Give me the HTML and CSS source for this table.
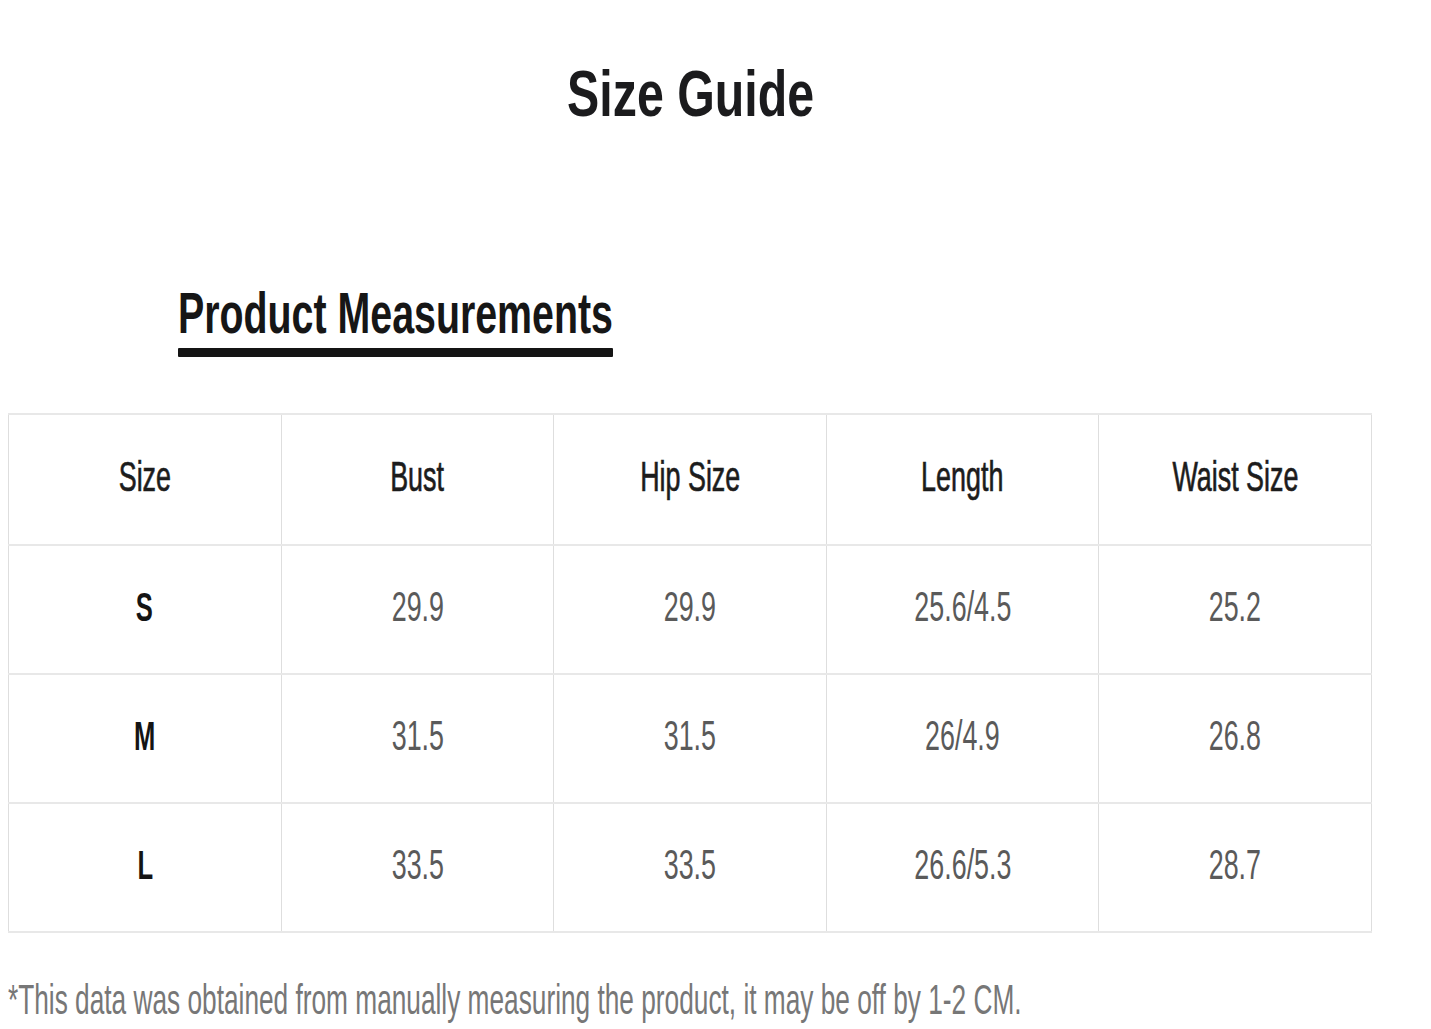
FILE: index.html
```html
<!DOCTYPE html>
<html lang="en">
<head>
<meta charset="utf-8">
<title>Size Guide</title>
<link rel="stylesheet" href="styles.css">
</head>
<body>
<div class="page">
  <h1 class="title"><span class="sq sq-title">Size Guide</span></h1>
  <div class="subhead">
    <h2 class="subtitle"><span class="sq sq-sub">Product Measurements</span></h2>
    <div class="underline"></div>
  </div>
  <table class="sizes">
    <thead>
      <tr>
        <th><span class="sq">Size</span></th>
        <th><span class="sq">Bust</span></th>
        <th><span class="sq">Hip Size</span></th>
        <th><span class="sq">Length</span></th>
        <th><span class="sq">Waist Size</span></th>
      </tr>
    </thead>
    <tbody>
      <tr>
        <td class="sz"><span class="sq">S</span></td>
        <td><span class="sq">29.9</span></td>
        <td><span class="sq">29.9</span></td>
        <td><span class="sq">25.6/4.5</span></td>
        <td><span class="sq">25.2</span></td>
      </tr>
      <tr>
        <td class="sz"><span class="sq">M</span></td>
        <td><span class="sq">31.5</span></td>
        <td><span class="sq">31.5</span></td>
        <td><span class="sq">26/4.9</span></td>
        <td><span class="sq">26.8</span></td>
      </tr>
      <tr>
        <td class="sz"><span class="sq">L</span></td>
        <td><span class="sq">33.5</span></td>
        <td><span class="sq">33.5</span></td>
        <td><span class="sq">26.6/5.3</span></td>
        <td><span class="sq">28.7</span></td>
      </tr>
    </tbody>
  </table>
  <p class="note"><span class="sq sq-note">*This data was obtained from manually measuring the product, it may be off by 1-2 CM.</span></p>
</div>
</body>
</html>
```
FILE: styles.css
```css
html, body {
  margin: 0;
  padding: 0;
  background: #ffffff;
}

body {
  font-family: "Liberation Sans", Arial, sans-serif;
  color: #1a1a1a;
}

.page {
  width: 1431px;
  height: 1029px;
  overflow: hidden;
  position: relative;
}

.sq {
  display: inline-block;
  white-space: nowrap;
  transform: scaleX(0.64);
  transform-origin: center center;
}

.title {
  margin: 0;
  padding-top: 62px;
  text-align: center;
  font-size: 64px;
  line-height: 64px;
  font-weight: 700;
  color: #1b1b1d;
}

.sq-title {
  transform: scaleX(0.755);
  margin-left: -50px;
}

.subhead {
  margin-top: 159px;
  margin-left: 178px;
  width: 435px;
}

.subtitle {
  margin: 0;
  font-size: 57px;
  line-height: 57px;
  font-weight: 700;
  color: #161616;
  height: 57px;
}

.sq-sub {
  transform: scaleX(0.69);
  transform-origin: left center;
}

.underline {
  margin-top: 6px;
  height: 9px;
  background: #141414;
  border-radius: 1px;
}

.sizes {
  margin-top: 56px;
  margin-left: 8px;
  width: 1364px;
  border-collapse: collapse;
  table-layout: fixed;
}

.sizes th,
.sizes td {
  height: 121px;
  padding: 0 0 6px 0;
  border-left: 1px solid #dedede;
  border-right: 1px solid #dedede;
  border-top: 2px solid #e8e8e8;
  border-bottom: 2px solid #e8e8e8;
  text-align: center;
  vertical-align: middle;
  font-size: 42px;
  line-height: 42px;
}

.sizes th {
  height: 123px;
  font-weight: 400;
  color: #1c1c1c;
  -webkit-text-stroke: 0.7px #1c1c1c;
}

.sizes td {
  color: #5a5a5a;
}

.sizes td.sz {
  color: #141414;
  font-weight: 700;
  font-size: 40px;
}

.note {
  margin: 46px 0 0 8px;
  font-size: 42px;
  line-height: 42px;
  color: #777777;
}

.sq-note {
  transform: scaleX(0.625);
  transform-origin: left center;
}
```
